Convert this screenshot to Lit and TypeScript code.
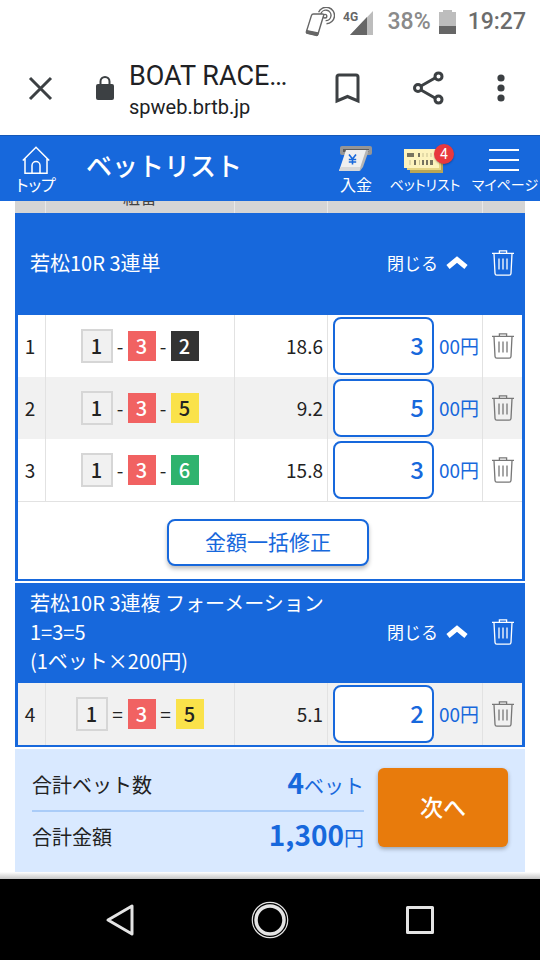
import { LitElement, html, css } from "lit";
import { customElement, property, state } from "lit/decorators.js";
import { classMap } from "lit/directives/class-map.js";

interface Bet {
  no: number;
  boats: number[];
  sep: string;
  odds: string;
  amount: string;
}

interface BetGroup {
  lines: string[];
  bets: Bet[];
  bulkEdit: boolean;
}

const GROUPS: BetGroup[] = [
  {
    lines: ["若松10R 3連単"],
    bulkEdit: true,
    bets: [
      { no: 1, boats: [1, 3, 2], sep: "-", odds: "18.6", amount: "3" },
      { no: 2, boats: [1, 3, 5], sep: "-", odds: "9.2", amount: "5" },
      { no: 3, boats: [1, 3, 6], sep: "-", odds: "15.8", amount: "3" },
    ],
  },
  {
    lines: ["若松10R 3連複 フォーメーション", "1=3=5", "(1ベット×200円)"],
    bulkEdit: false,
    bets: [{ no: 4, boats: [1, 3, 5], sep: "=", odds: "5.1", amount: "2" }],
  },
];

const trashIcon = html`<svg width="22" height="26" viewBox="0 0 22 26" fill="none" stroke="currentColor" stroke-width="1.3">
  <path d="M0 3.4H22M7.4 3V.8H14.6V3M2 3.6L3 23.4Q3.1 25.2 4.8 25.2H17.2Q18.9 25.2 19 23.4L20 3.6M7 8.5V19.5M11 8.5V19.5M15 8.5V19.5" />
</svg>`;

const columns = html`<colgroup>
  <col class="c-no" /><col /><col class="c-odds" /><col class="c-amount" /><col class="c-del" />
</colgroup>`;

const columnStyles = css`
  table { width: 100%; table-layout: fixed; border-collapse: separate; border-spacing: 0; }
  .c-no { width: 28px; }
  .c-odds { width: 93px; }
  .c-amount { width: 155px; }
  .c-del { width: 39px; }
  button { font: inherit; color: inherit; background: none; border: 0; padding: 0; margin: 0; cursor: pointer; }
  svg { display: block; }
`;

@customElement("system-status")
class SystemStatus extends LitElement {
  static styles = css`
    :host { display: flex; align-items: center; justify-content: flex-end; height: 43px; padding-right: 14px; font: 500 23px/28px Roboto, sans-serif; color: #6c6c6c; }
    svg { display: block; }
    .signal { margin-left: 8px; }
    .percent { margin-left: 14px; color: #8a8a8a; }
    .battery { margin-left: 8px; }
    .time { margin-left: 12px; }
  `;
  render() {
    return html`
      <svg width="30" height="30" viewBox="0 0 30 30" fill="none" stroke="#666" stroke-width="1.4">
        <path d="M13.6 5.2A8.3 8.3 0 1 1 21.5 16.800M15.8 7A5.2 5.2 0 1 1 20.6 13.600" />
        <circle cx="20" cy="9.2" r="1.8" />
        <path d="M8.500 7H17.500Q19 7 18.600 8.500L13 27Q12.600 28.700 11 28.400L2.500 26.400Q1 26 1.4 24.600L6.400 8.600Q6.900 7 8.500 7Z" fill="#fff" />
        <path d="M1.9 23.600L13.200 26 12.200 28.300 1.8 26Z" fill="#666" />
      </svg>
      <svg class="signal" width="31" height="28" viewBox="0 0 31 28">
        <path d="M30 3V27H7Z" fill="#bdbdbd" />
        <path d="M24 9V27H7Z" fill="#666" />
        <text x="0" y="13" font-family="Roboto, sans-serif" font-size="12" font-weight="700" fill="#666">4G</text>
      </svg>
      <span class="percent">38%</span>
      <svg class="battery" width="17" height="26" viewBox="0 0 17 26">
        <path d="M4 1H13V3H17V25H0V3H4Z" fill="#bdbdbd" /><path d="M0 17H17V25H0Z" fill="#666" />
      </svg>
      <span class="time">19:27</span>
    `;
  }
}

@customElement("browser-bar")
class BrowserBar extends LitElement {
  static styles = css`
    :host { display: flex; align-items: center; height: 92px; padding: 0 35px 2px 28px; box-sizing: border-box; font-family: Roboto, sans-serif; color: #202124; }
    button { background: none; border: 0; padding: 0; color: #3c4043; }
    svg { display: block; }
    .lock { margin-left: 42px; color: #3c4043; }
    .page { flex: 1; min-width: 0; margin-left: 14px; padding-top: 4px; }
    .title { font-size: 27px; line-height: 34px; white-space: nowrap; }
    .host { font-size: 20px; line-height: 28px; }
    .actions { display: flex; align-items: center; gap: 53px; }
  `;
  render() {
    return html`
      <button aria-label="閉じる">
        <svg width="25" height="25" viewBox="0 0 25 25" stroke="currentColor" stroke-width="3"><path d="M2 2L23 23M23 2L2 23" /></svg>
      </button>
      <svg class="lock" width="20" height="26" viewBox="0 0 20 26">
        <rect x="1" y="9" width="18" height="16" rx="2" fill="currentColor" />
        <path d="M5.5 10V6.5a4.5 4.5 0 0 1 9 0V10" fill="none" stroke="currentColor" stroke-width="2" />
      </svg>
      <div class="page">
        <div class="title">BOAT RACE…</div>
        <div class="host">spweb.brtb.jp</div>
      </div>
      <div class="actions">
        <button aria-label="ブックマーク">
          <svg width="25" height="31" viewBox="0 0 25 31" fill="none" stroke="currentColor" stroke-width="3"><path d="M2 28V4Q2 2 4 2H21Q23 2 23 4V28L12.5 23.5Z" /></svg>
        </button>
        <button aria-label="共有">
          <svg width="31" height="34" viewBox="0 0 31 34" fill="none" stroke="currentColor" stroke-width="3">
            <path d="M8 15L22 7M8 19L22 27" /><circle cx="5" cy="17" r="3.5" /><circle cx="25.500" cy="5.4" r="3.5" /><circle cx="25.500" cy="28.6" r="3.5" />
          </svg>
        </button>
        <button aria-label="メニュー">
          <svg width="8" height="28" viewBox="0 0 8 28" fill="currentColor"><circle cx="4" cy="4" r="3.6" /><circle cx="4" cy="14" r="3.6" /><circle cx="4" cy="24" r="3.6" /></svg>
        </button>
      </div>
    `;
  }
}

@customElement("app-header")
class AppHeader extends LitElement {
  static styles = css`
    :host { display: flex; align-items: flex-start; height: 66px; padding: 0 1px 0 14px; box-sizing: border-box; background: #1768dc; border-top: 1px solid #1558b8; color: #fff; }
    a { display: flex; flex-direction: column; align-items: center; padding-top: 10px; color: inherit; text-decoration: none; font-size: 16px; line-height: 20px; font-feature-settings: "palt"; white-space: nowrap; }
    svg { display: block; }
    h1 { flex: 1; margin: 0 0 0 28px; font-size: 26px; line-height: 58px; font-weight: 500; }
    nav { display: flex; gap: 2px; }
    .home { width: 44px; }
    .deposit { width: 46px; }
    .bets { width: 88px; position: relative; font-size: 14px; }
    .mypage { width: 68px; font-size: 14px; }
    .badge { position: absolute; top: 8px; left: 53px; width: 20px; height: 20px; border-radius: 50%; background: #e8383d; box-shadow: 0 1px 2px rgba(0, 0, 0, 0.3); font: 14px/20px Roboto, sans-serif; text-align: center; }
  `;
  render() {
    return html`
      <a class="home" href="#top">
        <svg width="28" height="28" viewBox="0 0 28 28" fill="none" stroke="#fff" stroke-width="1.5"><path d="M.8 14.5L14 1.2 27.2 14.5M3 12.5V27.2H25V12.5M10 27V19.5a4 4 0 0 1 8 0V27" /></svg>
        トップ
      </a>
      <h1>ベットリスト</h1>
      <nav>
        <a class="deposit" href="#deposit">
          <svg width="34" height="28" viewBox="0 0 34 28">
            <rect x="1" y="0" width="32" height="9" rx="2" fill="#959595" /><rect x="4" y="3" width="26" height="3" fill="#5c5c5c" />
            <path d="M25 4H30L24 21 21 25H17Z" fill="#b5b5b5" /><path d="M7 4H27L20 25H0Z" fill="#efefef" /><path d="M0 25L1.500 21H21.500L20 25Z" fill="#d8d8d8" />
            <path d="M10 8.500L13.500 13 17 8.500M13.500 13V18.500M9.800 13.500H17.200M9.800 16H17.200" fill="none" stroke="#1768dc" stroke-width="1.6" />
          </svg>
          入金
        </a>
        <a class="bets" href="#bets">
          <svg width="42" height="28" viewBox="0 0 42 28">
            <path d="M6 8H39V27H6Z" fill="#b9a555" /><path d="M3 5H37V24H3Z" fill="#e6d585" /><path d="M0 3H35V22H0Z" fill="#fdf3bd" />
            <path d="M3 7H10V11H3ZM14 7H16V11H14ZM10 14H12V19H10ZM18 14H20V19H18ZM22 14H24V19H22ZM26 14H29V19H26Z" fill="#77735f" />
            <path d="M19 7V11M23 7V11M27 7V11M6 14V19M15.500 14V19" stroke="#c9c193" />
          </svg>
          ベットリスト
          <span class="badge">4</span>
        </a>
        <a class="mypage" href="#mypage">
          <svg width="32" height="28" viewBox="0 0 32 28" stroke="#fff" stroke-width="2"><path d="M0 4H30M0 14H30M0 24H30" /></svg>
          マイページ
        </a>
      </nav>
    `;
  }
}

@customElement("bet-group")
class BetGroupView extends LitElement {
  @property({ attribute: false }) group!: BetGroup;

  static styles = [
    columnStyles,
    css`
      :host { display: block; background: #fff; border: solid #1768dc; border-width: 0 3px 2px; }
      header { display: flex; align-items: center; background: #1768dc; color: #fff; min-height: 100px; box-sizing: border-box; padding: 4px 8px 7px 12px; }
      header.tall { min-height: 102px; }
      h2 { flex: 1; margin: 0; font-size: 20px; line-height: 29px; font-weight: 400; }
      .toggle { display: flex; align-items: center; gap: 8px; margin-right: 24px; font-size: 17px; line-height: 26px; white-space: nowrap; }
      td { height: 62px; padding: 0; box-sizing: border-box; border-right: 1px solid #e2e2e2; font-size: 19px; line-height: 28px; color: #222; vertical-align: middle; }
      td:last-child { border-right: 0; color: #777; }
      tr.striped td { background: #f1f1f1; }
      .no { text-align: center; padding-right: 3px; }
      .odds { text-align: right; padding-right: 4px; }
      .combo { display: flex; align-items: center; justify-content: center; padding-right: 1px; }
      .boat { box-sizing: border-box; width: 28px; height: 30px; line-height: 30px; text-align: center; font-size: 20px; font-weight: 500; }
      .sep { width: 15px; text-align: center; }
      .sep.wide { width: 20px; }
      .b1 { width: 32px; height: 34px; background: #f1f1f1; border: 2px solid #d6d6d6; }
      .b2 { background: #333; color: #fff; }
      .b3 { background: #f16262; color: #fff; }
      .b5 { background: #fae24a; }
      .b6 { background: #2fb36e; color: #fff; }
      .amount { display: flex; align-items: center; gap: 5px; padding-left: 5px; color: #1768dc; }
      input { box-sizing: border-box; width: 101px; height: 58px; margin: 0; padding: 0 8px 4px; border: 2px solid #1768dc; border-radius: 8px; background: #fff; color: #1768dc; font: inherit; font-size: 24px; font-weight: 500; text-align: right; }
      td button { display: block; margin: 0 auto; }
      footer { display: flex; justify-content: center; height: 78px; box-sizing: border-box; padding: 17px 4px 0 0; border-top: 1px solid #e2e2e2; }
      .bulk { width: 202px; height: 47px; box-sizing: border-box; padding-bottom: 3px; border: 2px solid #1768dc; border-radius: 8px; background: #fff; color: #1768dc; font-size: 21px; box-shadow: 0 3px 4px rgba(0, 0, 0, 0.25); }
    `,
  ];

  private renderBet(bet: Bet) {
    return html`<tr class=${classMap({ striped: bet.no % 2 === 0 })}>
      <td class="no">${bet.no}</td>
      <td>
        <div class="combo">
          ${bet.boats.map((b, i) => html`${i ? html`<span class=${classMap({ sep: true, wide: bet.sep === "=" })}>${bet.sep}</span>` : ""}<span class="boat b${b}">${b}</span>`)}
        </div>
      </td>
      <td class="odds">${bet.odds}</td>
      <td>
        <label class="amount"><input type="text" inputmode="numeric" .value=${bet.amount} />00円</label>
      </td>
      <td><button aria-label="削除">${trashIcon}</button></td>
    </tr>`;
  }

  render() {
    const g = this.group;
    return html`
      <header class=${classMap({ tall: g.bulkEdit })}>
        <h2>${g.lines.map((l) => html`<div>${l}</div>`)}</h2>
        <button class="toggle">
          閉じる
          <svg width="22" height="13" viewBox="0 0 22 13" fill="none" stroke="currentColor" stroke-width="5"><path d="M2 11L11 3.500 20 11" /></svg>
        </button>
        <button aria-label="削除">${trashIcon}</button>
      </header>
      <table>${columns}<tbody>${g.bets.map((b) => this.renderBet(b))}</tbody></table>
      ${g.bulkEdit ? html`<footer><button class="bulk">金額一括修正</button></footer>` : ""}
    `;
  }
}

@customElement("bet-summary")
class BetSummary extends LitElement {
  static styles = css`
    :host { display: flex; align-items: flex-start; gap: 14px; height: 123px; box-sizing: border-box; padding: 9px 17px 0; background: #d9e9ff; }
    dl { flex: 1; margin: 0; }
    .row { display: flex; align-items: center; justify-content: space-between; height: 52px; box-sizing: border-box; font-size: 20px; color: #222; }
    .row + .row { border-top: 2px solid #aaccf8; height: 50px; }
    dd { margin: 0; color: #1768dc; line-height: 40px; }
    strong { font-size: 28px; font-weight: 700; }
    .next { width: 130px; height: 79px; margin-top: 10px; padding-bottom: 4px; border: 0; border-radius: 6px; background: #e87b0c; color: #fff; font: inherit; font-size: 23px; font-weight: 500; box-shadow: 0 2px 4px rgba(0, 0, 0, 0.3); }
  `;
  render() {
    return html`
      <dl>
        <div class="row"><dt>合計ベット数</dt><dd><strong>4</strong>ベット</dd></div>
        <div class="row"><dt>合計金額</dt><dd><strong>1,300</strong>円</dd></div>
      </dl>
      <button class="next">次へ</button>
    `;
  }
}

@customElement("system-nav")
class SystemNav extends LitElement {
  static styles = css`
    :host { display: flex; align-items: center; justify-content: center; gap: 110px; height: 81px; background: #000; }
    button { display: block; width: 40px; background: none; border: 0; padding: 0; }
    svg { display: block; margin: 0 auto; }
  `;
  render() {
    return html`
      <button aria-label="戻る"><svg width="40" height="40" viewBox="0 0 40 40" fill="none" stroke="#e4e4e4" stroke-width="3" stroke-linejoin="round"><path d="M32 6V34L8 20Z" /></svg></button>
      <button aria-label="ホーム"><svg width="40" height="40" viewBox="0 0 40 40" fill="none" stroke="#e4e4e4"><circle cx="20" cy="20" r="17.700" stroke-width="1.200" /><circle cx="20" cy="20" r="14" stroke-width="3.500" /></svg></button>
      <button aria-label="履歴"><svg width="40" height="40" viewBox="0 0 40 40" fill="none" stroke="#e4e4e4" stroke-width="3" stroke-linejoin="round"><rect x="7.500" y="7.500" width="25" height="25" /></svg></button>
    `;
  }
}

@customElement("app-root")
class AppRoot extends LitElement {
  @state() private groups = GROUPS;

  static styles = [
    columnStyles,
    css`
      :host { display: flex; flex-direction: column; min-height: 100vh; background: #fff; font-family: "Noto Sans CJK JP", sans-serif; }
      main { flex: 1; display: flex; flex-direction: column; gap: 2px; padding: 0 15px 7px; background: linear-gradient(to top, #c4c4c4, #fff 7px); }
      .bets { display: flex; flex-direction: column; gap: 2px; }
      .columns { border: solid #d5d5d5; border-width: 0 3px; box-sizing: border-box; margin-bottom: -2px; background: #d5d5d5; }
      th { height: 12px; padding: 0; box-sizing: border-box; border-right: 1px solid #e8e8e8; font-size: 17px; font-weight: 400; color: #444; }
      th:last-child { border-right: 0; }
      .clip { display: flex; align-items: flex-end; justify-content: center; height: 12px; overflow: hidden; line-height: 32px; }
    `,
  ];

  render() {
    return html`
      <system-status></system-status>
      <browser-bar></browser-bar>
      <app-header></app-header>
      <main>
        <div class="bets">
          <table class="columns">
            ${columns}
            <thead><tr><th></th><th><div class="clip">組番</div></th><th></th><th></th><th></th></tr></thead>
          </table>
          ${this.groups.map((g) => html`<bet-group .group=${g}></bet-group>`)}
        </div>
        <bet-summary></bet-summary>
      </main>
      <system-nav></system-nav>
    `;
  }
}
